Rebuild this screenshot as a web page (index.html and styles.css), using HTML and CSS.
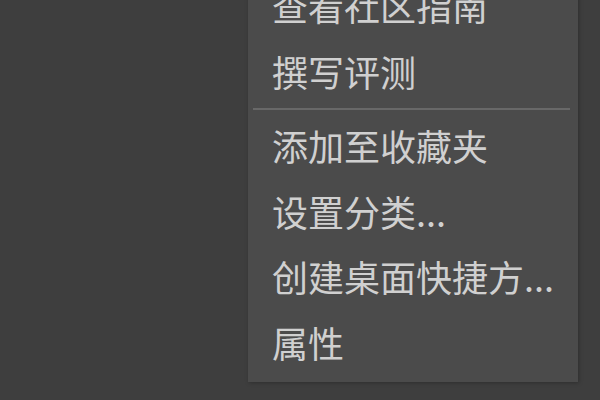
FILE: index.html
```html
<!DOCTYPE html>
<html lang="zh-CN">
<head>
<meta charset="UTF-8">
<title>游戏菜单</title>
<link rel="stylesheet" href="styles.css">
</head>
<body>

<div class="context-menu">
    <div class="menu-item">查看社区指南</div>
    <div class="menu-item">撰写评测</div>
    <div class="menu-sep"></div>
    <div class="menu-item">添加至收藏夹</div>
    <div class="menu-item">设置分类...</div>
    <div class="menu-item">创建桌面快捷方...</div>
    <div class="menu-item">属性</div>
</div>

</body>
</html>
```

FILE: styles.css
```css
body {
    margin: 0;
    padding: 0;
    height: 400px;
    overflow: hidden;
    background-color: #3e3e3e;
    font-family: "Noto Sans CJK SC", "Microsoft YaHei", sans-serif;
}
.context-menu {
    width: 330px;
    margin: -30px 0 0 248px;
    padding: 3px 0 7px 0;
    background-color: #4b4b4b;
    box-shadow: 1px 1px 4px rgba(0, 0, 0, 0.25);
}
.menu-item {
    height: 65.5px;
    line-height: 65.5px;
    padding-left: 24px;
    font-size: 36px;
    color: #d0d0d0;
    white-space: nowrap;
}
.menu-item:hover {
    background-color: #5a5a5a;
}
.menu-sep {
    height: 2px;
    margin: 3.5px 8px 3.5px 5px;
    background-color: #686868;
}
```
